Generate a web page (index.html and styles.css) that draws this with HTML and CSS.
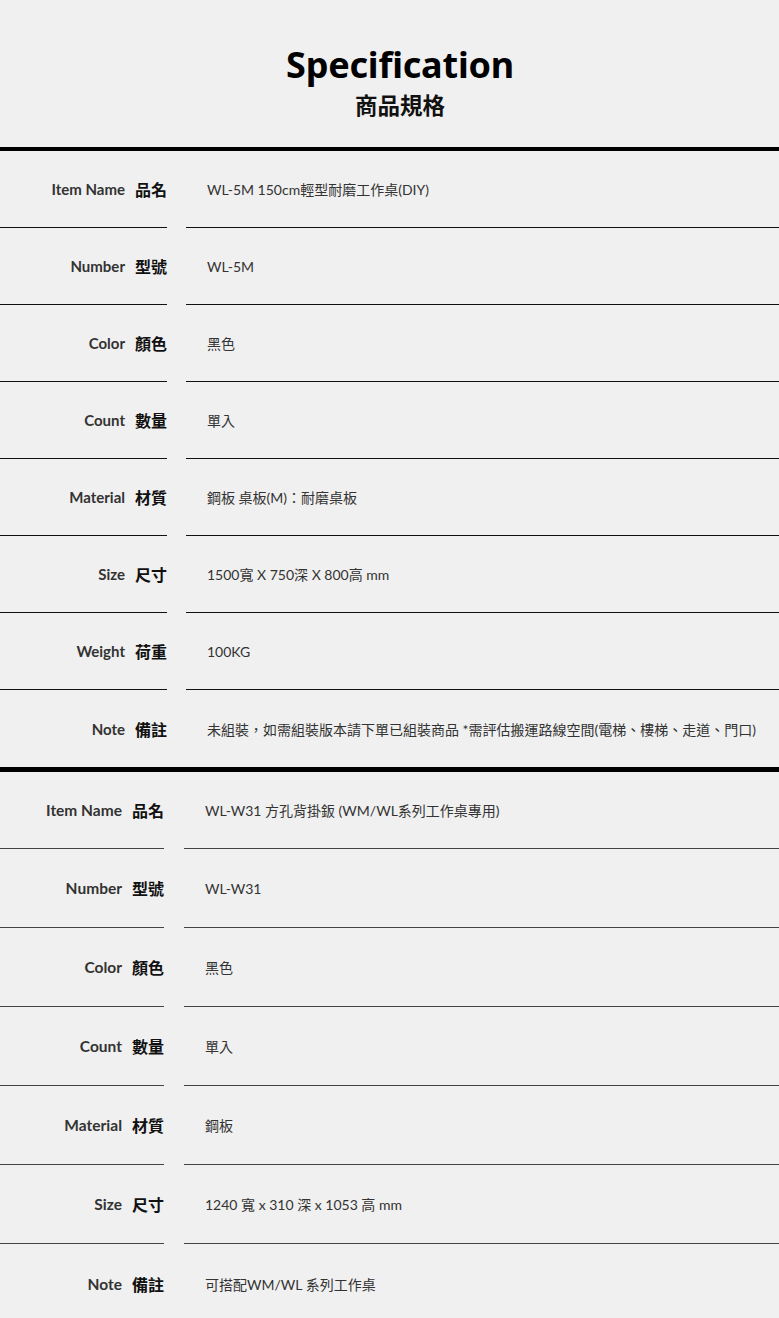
FILE: index.html
```html
<!DOCTYPE html>
<html lang="zh-Hant">
<head>
    <meta charset="UTF-8">
    <meta name="viewport" content="width=device-width, initial-scale=1.0">
    <title>Specification 商品規格</title>
    <link rel="stylesheet" href="styles.css">
</head>
<body>

<header class="spec-header">
    <h1>Specification</h1>
    <p>商品規格</p>
</header>

<div class="spec">
    <div class="row">
        <div class="label"><span class="en">Item Name</span><span class="zh">品名</span></div>
        <div class="value">WL-5M 150cm輕型耐磨工作桌(DIY)</div>
    </div>
    <div class="row">
        <div class="label"><span class="en">Number</span><span class="zh">型號</span></div>
        <div class="value">WL-5M</div>
    </div>
    <div class="row">
        <div class="label"><span class="en">Color</span><span class="zh">顏色</span></div>
        <div class="value">黑色</div>
    </div>
    <div class="row">
        <div class="label"><span class="en">Count</span><span class="zh">數量</span></div>
        <div class="value">單入</div>
    </div>
    <div class="row">
        <div class="label"><span class="en">Material</span><span class="zh">材質</span></div>
        <div class="value">鋼板 桌板(M)：耐磨桌板</div>
    </div>
    <div class="row">
        <div class="label"><span class="en">Size</span><span class="zh">尺寸</span></div>
        <div class="value">1500寬 X 750深 X 800高 mm</div>
    </div>
    <div class="row">
        <div class="label"><span class="en">Weight</span><span class="zh">荷重</span></div>
        <div class="value">100KG</div>
    </div>
    <div class="row">
        <div class="label"><span class="en">Note</span><span class="zh">備註</span></div>
        <div class="value">未組裝，如需組裝版本請下單已組裝商品 *需評估搬運路線空間(電梯、樓梯、走道、門口)</div>
    </div>
</div>

<div class="spec spec-second">
    <div class="row">
        <div class="label"><span class="en">Item Name</span><span class="zh">品名</span></div>
        <div class="value">WL-W31 方孔背掛鈑 (WM/WL系列工作桌專用)</div>
    </div>
    <div class="row">
        <div class="label"><span class="en">Number</span><span class="zh">型號</span></div>
        <div class="value">WL-W31</div>
    </div>
    <div class="row">
        <div class="label"><span class="en">Color</span><span class="zh">顏色</span></div>
        <div class="value">黑色</div>
    </div>
    <div class="row">
        <div class="label"><span class="en">Count</span><span class="zh">數量</span></div>
        <div class="value">單入</div>
    </div>
    <div class="row">
        <div class="label"><span class="en">Material</span><span class="zh">材質</span></div>
        <div class="value">鋼板</div>
    </div>
    <div class="row">
        <div class="label"><span class="en">Size</span><span class="zh">尺寸</span></div>
        <div class="value">1240 寬 x 310 深 x 1053 高 mm</div>
    </div>
    <div class="row">
        <div class="label"><span class="en">Note</span><span class="zh">備註</span></div>
        <div class="value">可搭配WM/WL 系列工作桌</div>
    </div>
</div>

</body>
</html>
```

FILE: styles.css
```css
body {
    font-family: 'Noto Sans', 'Noto Sans CJK TC', sans-serif;
    margin: 0;
    padding: 0;
    background-color: #f0f0f0;
    color: #333;
}
.spec-header {
    text-align: center;
    padding: 43px 0 28px 21px;
}
.spec-header h1 {
    font-family: 'Noto Sans', 'Noto Sans CJK TC', sans-serif;
    font-size: 36px;
    line-height: 44px;
    font-weight: 700;
    letter-spacing: -0.2px;
    margin: 0;
    color: #000;
}
.spec-header p {
    font-family: 'Noto Sans CJK TC', sans-serif;
    font-size: 22.5px;
    line-height: 30px;
    font-weight: 700;
    margin: 2px 0 0;
    color: #111;
}
.spec {
    border-top: 4px solid #000;
}
.spec-second {
    border-top: 5px solid #000;
}
.row {
    display: grid;
    grid-template-columns: 166px 1fr;
    column-gap: 20px;
    height: 77px;
}
.label, .value {
    display: flex;
    align-items: center;
    border-bottom: 1px solid #111;
}
.label {
    justify-content: flex-end;
    margin-right: -1px;
}
.value {
    padding-left: 21px;
    font-family: 'Lato', 'Noto Sans CJK TC', sans-serif;
    font-size: 14px;
    color: #333;
}
.spec .row:last-child .label,
.spec .row:last-child .value {
    border-bottom: none;
}
.en {
    font-family: 'Lato', sans-serif;
    font-weight: 700;
    font-size: 15px;
    color: #333;
    margin-right: 10px;
}
.zh {
    font-family: 'Noto Sans CJK TC', sans-serif;
    font-weight: 700;
    font-size: 16px;
    color: #111;
}
.spec-second .row {
    grid-template-columns: 163px 1fr;
    column-gap: 21px;
    height: 79px;
}
.spec-second .row:first-child {
    height: 77px;
}
.spec-second .label, .spec-second .value {
    border-bottom-color: #444;
}
.spec-second .en {
    font-size: 15.5px;
}
```
